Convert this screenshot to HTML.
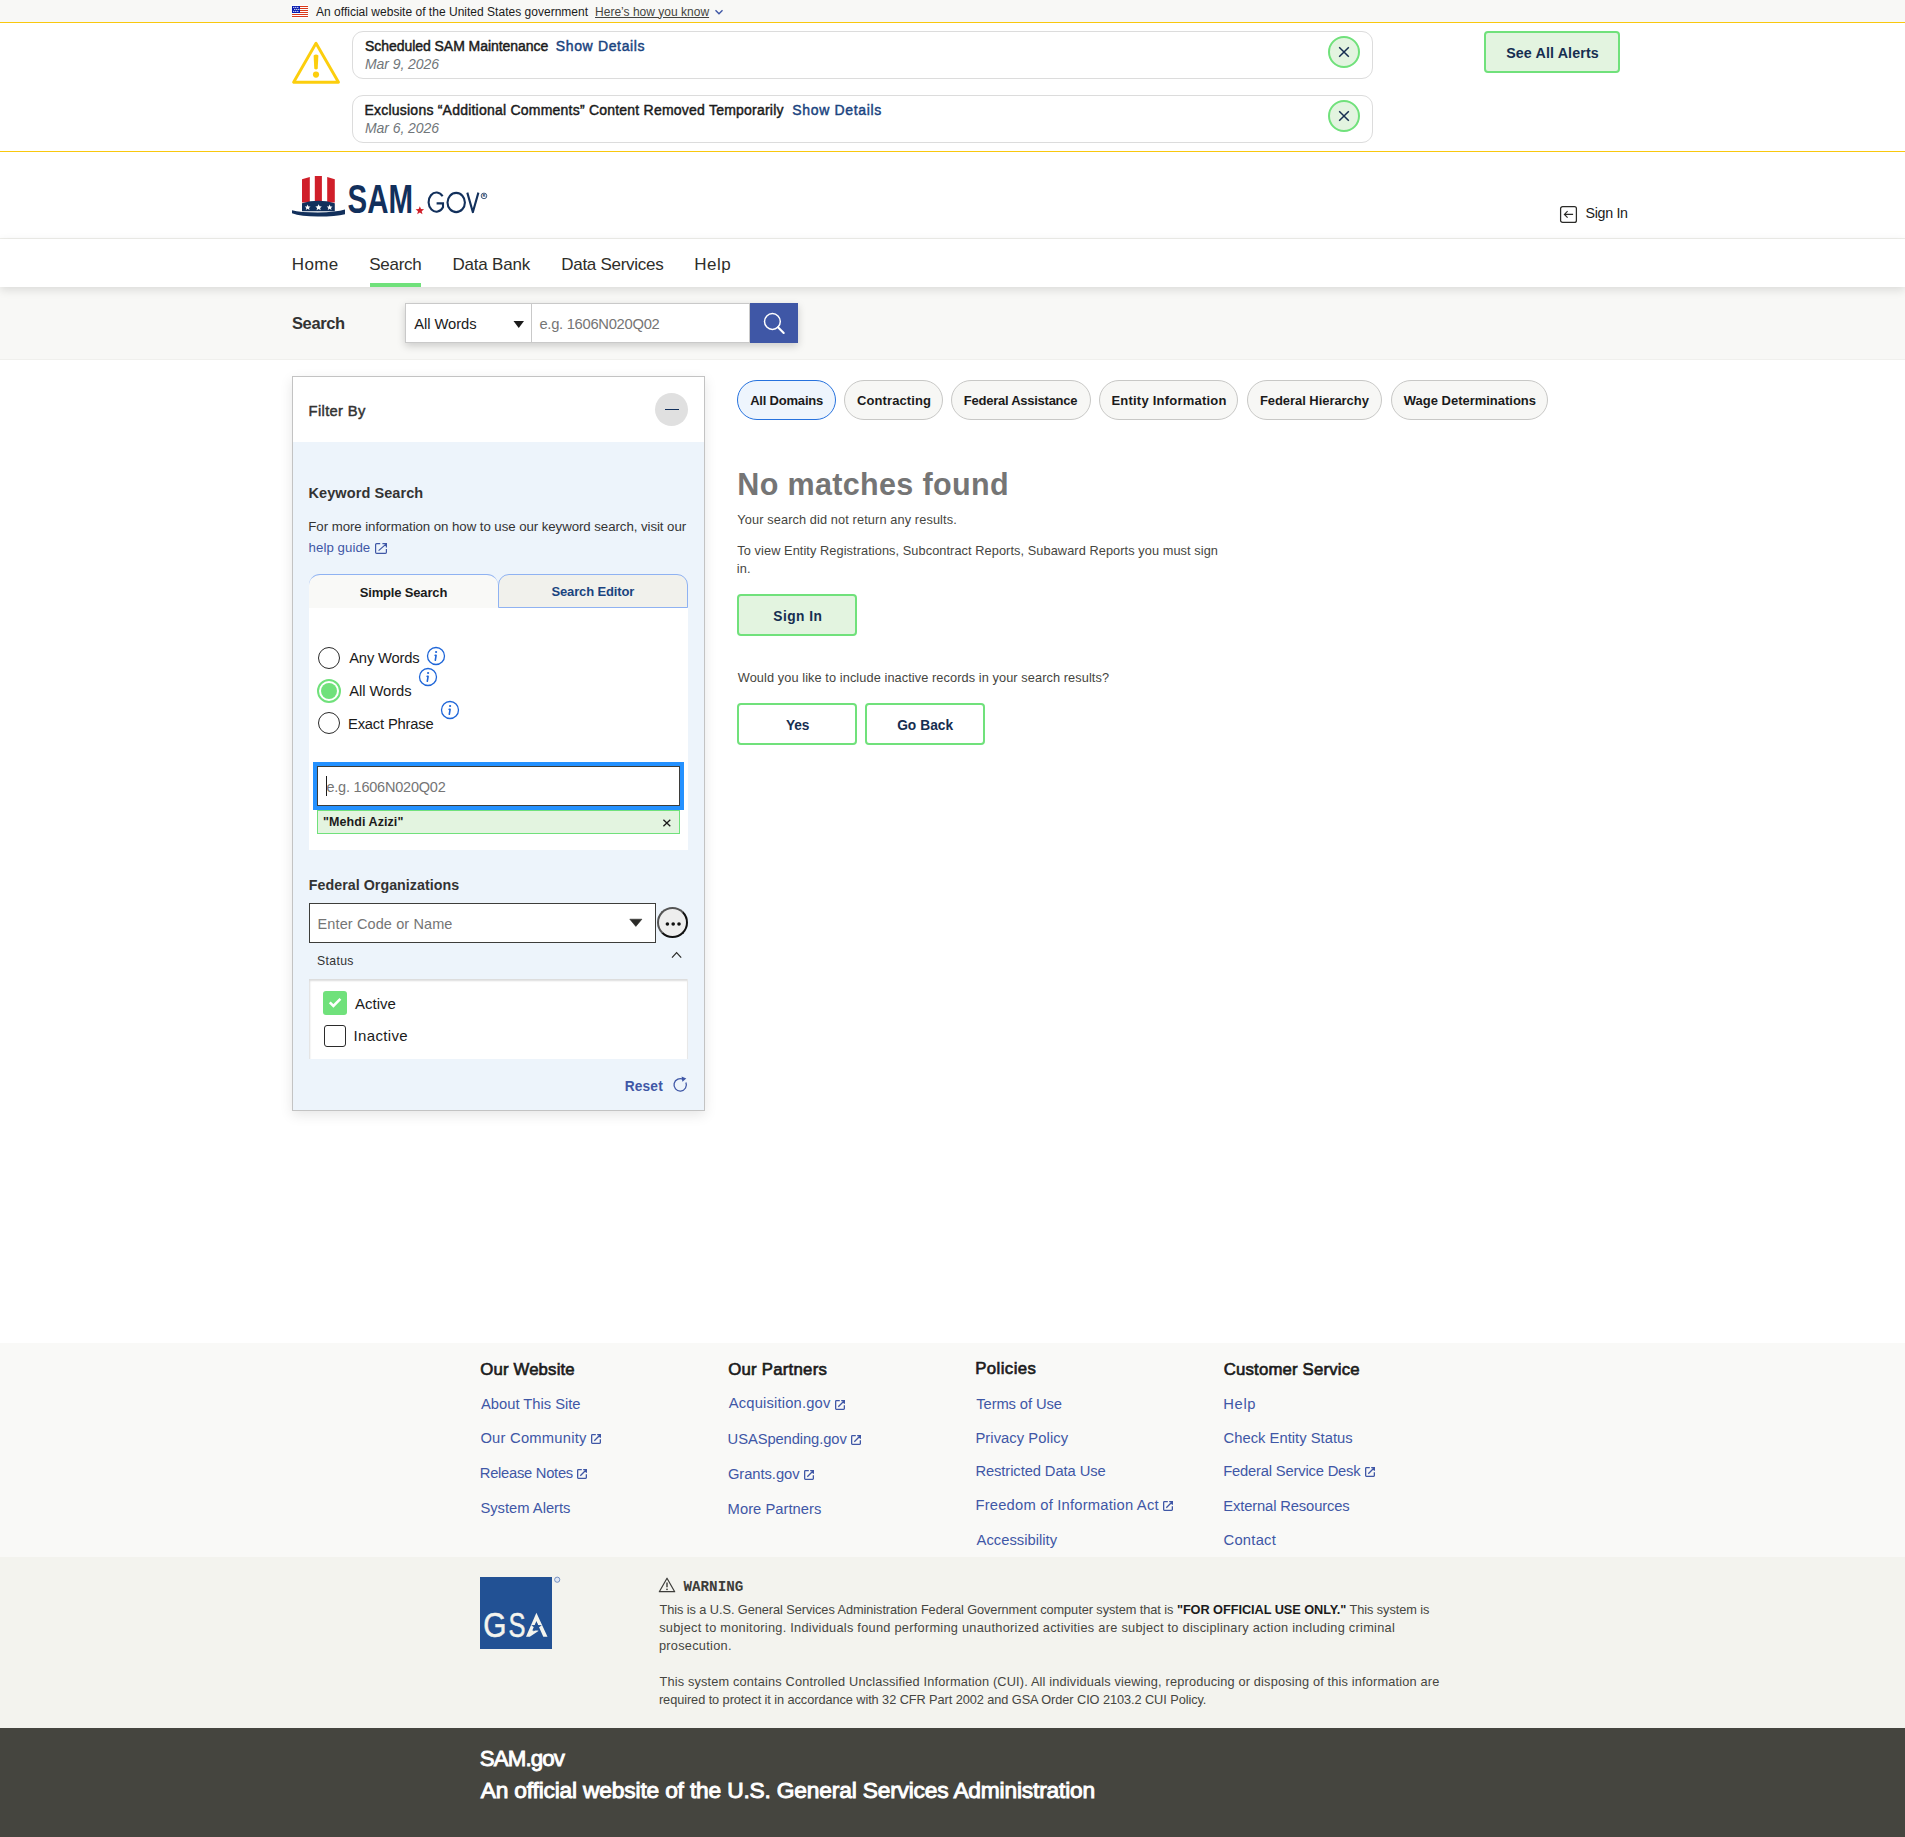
<!DOCTYPE html>
<html lang="en"><head><meta charset="utf-8"><title>SAM.gov | Search</title>
<style>
*{box-sizing:content-box}
html,body{margin:0;padding:0;background:#fff;width:1905px;height:1837px;overflow:hidden;position:relative}
body{font-family:"Liberation Sans",sans-serif}
.a{position:absolute}
.circ{border-radius:50%}
.t{position:absolute;line-height:0;white-space:nowrap;font-family:"Liberation Sans",sans-serif}
svg.a{overflow:visible}
</style></head><body>

<!-- banner -->
<div class="a" style="left:0;top:0;width:1905px;height:22px;background:#f8f8f6"></div>
<div class="a" style="left:0;top:22px;width:1905px;height:1px;background:#f9c80e"></div>
<svg class="a" style="left:292px;top:5px" width="16" height="13" viewBox="0 0 16 13" shape-rendering="crispEdges">
<rect width="16" height="13" fill="#fff"/>
<rect y="1" width="16" height="1" fill="#d9391a"/><rect y="3" width="16" height="1" fill="#d9391a"/><rect y="5" width="16" height="1" fill="#d9391a"/><rect y="7" width="16" height="1" fill="#d9391a"/><rect y="9" width="16" height="1" fill="#d9391a"/><rect y="11" width="16" height="1" fill="#d9391a"/>
<rect x="0" y="1" width="8" height="7" fill="#0a1db0"/>
</svg>
<svg class="a" style="left:292px;top:5px" width="16" height="13" viewBox="0 0 16 13"><g fill="#fff"><circle cx="1.8" cy="2.4" r=".6"/><circle cx="3.8" cy="2.4" r=".6"/><circle cx="5.8" cy="2.4" r=".6"/><circle cx="2.8" cy="4.4" r=".6"/><circle cx="4.8" cy="4.4" r=".6"/><circle cx="6.8" cy="4.4" r=".6"/><circle cx="1.8" cy="6.4" r=".6"/><circle cx="3.8" cy="6.4" r=".6"/><circle cx="5.8" cy="6.4" r=".6"/></g></svg>
<svg class="a" style="left:713px;top:7px" width="12" height="10" viewBox="0 0 12 10"><path d="M2.5 3.2L6 6.7L9.5 3.2" fill="none" stroke="#3f57a6" stroke-width="1.4"/></svg>

<!-- alerts -->
<div class="a" style="left:0;top:151px;width:1905px;height:1px;background:#f9c80e"></div>
<svg class="a" style="left:290px;top:40px" width="52" height="46" viewBox="0 0 52 46"><path d="M26 3.3L3.6 42.3H48.5Z" fill="none" stroke="#fcce0d" stroke-width="2.9" stroke-linejoin="round"/><path d="M23.6 15.6Q26 13.6 28.4 15.6L27.7 28.7Q26 30.1 24.3 28.7Z" fill="#fcce0d"/><circle cx="26" cy="34.6" r="3.1" fill="#fcce0d"/></svg>
<div class="a" style="left:352px;top:31px;width:1019px;height:46px;border:1px solid #dcdcdc;border-radius:11px"></div>
<div class="a" style="left:352px;top:95px;width:1019px;height:46px;border:1px solid #dcdcdc;border-radius:11px"></div>
<div class="a circ" style="left:1328px;top:36px;width:28px;height:28px;border:2px solid #70e17b;background:#e3f4e0"></div>
<div class="a circ" style="left:1328px;top:100px;width:28px;height:28px;border:2px solid #70e17b;background:#e3f4e0"></div>
<svg class="a" style="left:1334px;top:42px" width="20" height="20" viewBox="0 0 20 20"><path d="M5.2 5.2L14.8 14.8M14.8 5.2L5.2 14.8" stroke="#162e51" stroke-width="1.5"/></svg>
<svg class="a" style="left:1334px;top:106px" width="20" height="20" viewBox="0 0 20 20"><path d="M5.2 5.2L14.8 14.8M14.8 5.2L5.2 14.8" stroke="#162e51" stroke-width="1.5"/></svg>
<div class="a" style="left:1484px;top:31px;width:132px;height:38px;border:2px solid #70e17b;border-radius:4px;background:#e3f4e0"></div>

<!-- header -->
<div class="a" style="left:0;top:238px;width:1905px;height:1px;background:#efefeb"></div>
<svg class="a" style="left:292px;top:170px" width="200" height="50" viewBox="0 0 200 50">
 <path d="M10 9.3L17.8 7.1V32.5H10Z" fill="#d01f2a"/>
 <path d="M22.8 6H29.9V32.5H22.8Z" fill="#d01f2a"/>
 <path d="M35.2 7.1L42.8 9.3V32.5H35.2Z" fill="#d01f2a"/>
 <path d="M10 33.2Q26.4 28.4 42.8 33.2V41.3H10Z" fill="#12305c"/>
 <path d="M0 40.2Q8 42.4 26 42.4Q44 42.4 53 39.6V44.3Q44 46.6 26 46.6Q9 46.6 0 43.3Z" fill="#12305c"/>
 <g fill="#fff"><path d="M15.6 34.5l.9 1.9 2 .2-1.5 1.3.5 2-1.9-1.1-1.8 1.1.5-2-1.5-1.3 2-.2z"/><path d="M26.6 34.2l1 2.1 2.2.2-1.7 1.5.5 2.2-2-1.2-2 1.2.5-2.2-1.7-1.5 2.2-.2z"/><path d="M37.6 34.5l.9 1.9 2 .2-1.5 1.3.5 2-1.9-1.1-1.8 1.1.5-2-1.5-1.3 2-.2z"/></g>
 <text x="55.5" y="42.6" font-family="Liberation Sans" font-weight="700" font-size="39.8" fill="#12305c" textLength="65.5" lengthAdjust="spacingAndGlyphs">SAM</text>
 <path d="M127.8 36.2l1.2 2.9 3.1.2-2.4 2 .8 3-2.7-1.7-2.6 1.7.8-3-2.4-2 3.1-.2z" fill="#d01f2a"/>
 <g fill="none" stroke="#12305c" stroke-width="2.1"><path d="M150.6 26.3A7.8 9.6 0 1 0 151 37.2V33.4H144.6"/><ellipse cx="164.2" cy="32.5" rx="8.7" ry="9.6"/><path d="M175.3 22.6L180.85 42.1L186.4 22.6" stroke-linejoin="round"/></g>
 <circle cx="192" cy="25.9" r="2.8" fill="none" stroke="#12305c" stroke-width=".8"/><text x="190.6" y="27.3" font-family="Liberation Sans" font-size="4" font-weight="700" fill="#12305c">R</text>
</svg>
<svg class="a" style="left:1558px;top:204px" width="21" height="21" viewBox="0 0 21 21"><rect x="2.6" y="2.6" width="15.8" height="15.8" rx="2" fill="none" stroke="#2b2b28" stroke-width="1.25"/><path d="M15.1 10.4H6.5M9.6 7.2L6.4 10.4L9.6 13.6" fill="none" stroke="#2b2b28" stroke-width="1.15"/></svg>

<!-- nav -->
<div class="a" style="left:0;top:287px;width:1905px;height:72px;background:#f8f8f6;border-bottom:1px solid #f0f0ed"></div>
<div class="a" style="left:0;top:239px;width:1905px;height:48px;background:#fff;box-shadow:0 3px 9px rgba(0,0,0,.12)"></div>
<div class="a" style="left:370px;top:283px;width:51px;height:4px;background:#70e17b"></div>
<div class="a" style="left:405px;top:303px;width:393px;height:40px;box-shadow:0 3px 8px rgba(0,0,0,.18)"></div>
<div class="a" style="left:405px;top:303px;width:125px;height:38px;border:1px solid #c9c9c9;background:#fff"></div>
<div class="a" style="left:532px;top:303px;width:217px;height:38px;border:1px solid #c9c9c9;border-left:0;background:#fff"></div>
<div class="a" style="left:750px;top:303px;width:48px;height:40px;background:#3f57a6"></div>
<svg class="a" style="left:510px;top:318px" width="16" height="12" viewBox="0 0 16 12"><path d="M3.5 3H14L8.75 10Z" fill="#1b1b1b"/></svg>
<svg class="a" style="left:760px;top:309px" width="28" height="28" viewBox="0 0 28 28"><circle cx="12.4" cy="12.5" r="7.9" fill="none" stroke="#fff" stroke-width="1.5"/><path d="M18 18.3L23.7 24" stroke="#fff" stroke-width="2.1" stroke-linecap="round"/></svg>

<!-- filter panel -->
<div class="a" style="left:292px;top:376px;width:411px;height:733px;border:1px solid #c3c3c3;background:#edf4fb;box-shadow:0 4px 12px rgba(0,0,0,.10)"></div>
<div class="a" style="left:293px;top:377px;width:411px;height:65px;background:#fff"></div>
<div class="a circ" style="left:655px;top:393px;width:33px;height:33px;background:#e0e0e0"></div>
<div class="a" style="left:665px;top:408.5px;width:14px;height:1.6px;background:#12305c"></div>
<svg class="a" style="left:372px;top:541px" width="17" height="14"></svg>


<!-- tabs -->
<div class="a" style="left:309px;top:574px;width:189px;height:33px;border-top:1px solid #8fb2f2;border-radius:11px 11px 0 0;background:#f9f9f7"></div>
<div class="a" style="left:498px;top:574px;width:188px;height:32px;border:1px solid #8fb2f2;border-radius:11px 11px 0 0;background:#f1f1ec"></div>
<div class="a" style="left:309px;top:608px;width:379px;height:242px;background:#fff"></div>
<div class="a circ" style="left:318px;top:647px;width:20px;height:20px;border:1px solid #2b2b2b"></div>
<div class="a circ" style="left:317px;top:679px;width:20px;height:20px;border:2px solid #70e17b"></div>
<div class="a circ" style="left:321px;top:683px;width:16px;height:16px;background:#70e17b"></div>
<div class="a circ" style="left:318px;top:712px;width:20px;height:20px;border:1px solid #2b2b2b"></div>
<svg class="a" style="left:426.3px;top:646.2px" width="20" height="20" viewBox="0 0 20 20"><circle cx="10" cy="10" r="8.5" fill="none" stroke="#1f66d8" stroke-width="1.3"/><circle cx="10.1" cy="6" r="1.1" fill="#1f66d8"/><path d="M9.2 9.4H10.1L9.3 14.3" fill="none" stroke="#1f66d8" stroke-width="1.6" stroke-linecap="round" stroke-linejoin="round"/></svg>
<svg class="a" style="left:418.2px;top:667.2px" width="20" height="20" viewBox="0 0 20 20"><circle cx="10" cy="10" r="8.5" fill="none" stroke="#1f66d8" stroke-width="1.3"/><circle cx="10.1" cy="6" r="1.1" fill="#1f66d8"/><path d="M9.2 9.4H10.1L9.3 14.3" fill="none" stroke="#1f66d8" stroke-width="1.6" stroke-linecap="round" stroke-linejoin="round"/></svg>
<svg class="a" style="left:440.2px;top:700.2px" width="20" height="20" viewBox="0 0 20 20"><circle cx="10" cy="10" r="8.5" fill="none" stroke="#1f66d8" stroke-width="1.3"/><circle cx="10.1" cy="6" r="1.1" fill="#1f66d8"/><path d="M9.2 9.4H10.1L9.3 14.3" fill="none" stroke="#1f66d8" stroke-width="1.6" stroke-linecap="round" stroke-linejoin="round"/></svg>
<div class="a" style="left:313px;top:762px;width:363px;height:40px;border:4px solid #2491ff"></div>
<div class="a" style="left:317px;top:766px;width:361px;height:38px;border:1px solid #3d3d3a;background:#fff"></div>
<div class="a" style="left:326px;top:776px;width:1.3px;height:20px;background:#1b1b1b"></div>
<div class="a" style="left:317px;top:810px;width:361px;height:22px;border:1px solid #70e17b;background:#e3f4e0"></div>
<svg class="a" style="left:660px;top:817px" width="14" height="12" viewBox="0 0 14 12"><path d="M3.4 2.7L10.3 9.3M10.3 2.7L3.4 9.3" stroke="#1b1b1b" stroke-width="1.3"/></svg>
<!-- fed org -->
<div class="a" style="left:309px;top:903px;width:345px;height:38px;border:1px solid #3d3d3a;background:#fff"></div>
<svg class="a" style="left:626px;top:915px" width="20" height="14" viewBox="0 0 20 14"><path d="M3.8 4.2H15.9L9.85 11.4Z" fill="#2b2b28" stroke="#2b2b28" stroke-width=".6" stroke-linejoin="round"/></svg>
<div class="a circ" style="left:657px;top:907px;width:27px;height:27px;border:2px solid #111;border-top-color:#555;border-left-color:#555;background:#eee"></div>
<svg class="a" style="left:660px;top:916px" width="25" height="14" viewBox="0 0 25 14"><g fill="#111"><circle cx="7.4" cy="8" r="1.8"/><circle cx="13.2" cy="8" r="1.8"/><circle cx="19" cy="8" r="1.8"/></g></svg>
<svg class="a" style="left:668px;top:948px" width="18" height="14" viewBox="0 0 18 14"><path d="M4 9.6L8.6 4.6L13.2 9.6" fill="none" stroke="#2b2b28" stroke-width="1.2"/></svg>
<div class="a" style="left:309px;top:979px;width:378px;height:80px;background:#fff;border-right:1px solid #e8e8e8;box-shadow:inset 1px 2px 2px rgba(0,0,0,.14)"></div>
<div class="a" style="left:323px;top:991px;width:24px;height:24px;border-radius:3px;background:#70e17b"></div>
<svg class="a" style="left:323px;top:991px" width="24" height="24" viewBox="0 0 24 24"><path d="M6.8 11.4L10.4 14.9L17.4 7.8" fill="none" stroke="#fff" stroke-width="2.6"/></svg>
<div class="a" style="left:324px;top:1025px;width:19.6px;height:19.6px;border:1.4px solid #2b2b2b;border-radius:3px;background:#fff"></div>
<svg class="a" style="left:670px;top:1075px" width="20" height="20" viewBox="0 0 20 20"><path d="M13.5 4.6A6.2 6.2 0 1 0 15.9 7.4" fill="none" stroke="#3f57a6" stroke-width="1.3"/><path d="M11.6 1.4L16.3 3.6L12.4 6.8Z" fill="#3f57a6"/></svg>

<!-- pills -->
<div class="a" style="left:737.2px;top:380px;width:96.59999999999991px;height:38px;border:1px solid #2672de;border-radius:20px;background:#eef5fd"></div><div class="a" style="left:844.2px;top:380px;width:96.5px;height:38px;border:1px solid #c8c8c6;border-radius:20px;background:#f7f7f5"></div><div class="a" style="left:951px;top:380px;width:137.70000000000005px;height:38px;border:1px solid #c8c8c6;border-radius:20px;background:#f7f7f5"></div><div class="a" style="left:1099.1px;top:380px;width:137.4000000000001px;height:38px;border:1px solid #c8c8c6;border-radius:20px;background:#f7f7f5"></div><div class="a" style="left:1247.2px;top:380px;width:133.20000000000005px;height:38px;border:1px solid #c8c8c6;border-radius:20px;background:#f7f7f5"></div><div class="a" style="left:1391px;top:380px;width:155.4000000000001px;height:38px;border:1px solid #c8c8c6;border-radius:20px;background:#f7f7f5"></div>
<!-- buttons -->
<div class="a" style="left:737px;top:594px;width:116px;height:38px;border:2px solid #70e17b;border-radius:4px;background:#e3f4e0"></div>
<div class="a" style="left:737px;top:703px;width:116px;height:37.5px;border:2px solid #70e17b;border-radius:4px;background:#fff"></div>
<div class="a" style="left:865px;top:703px;width:116px;height:37.5px;border:2px solid #70e17b;border-radius:4px;background:#fff"></div>

<!-- footer -->
<div class="a" style="left:0;top:1343px;width:1905px;height:214px;background:#f9f9f7"></div>
<div class="a" style="left:0;top:1557px;width:1905px;height:171px;background:#f3f3ee"></div>
<div class="a" style="left:0;top:1728px;width:1905px;height:109px;background:#45453f"></div>
<svg class="a" style="left:590.5px;top:1434.4px" width="10" height="10" viewBox="0 0 10 10"><path d="M4.8 0.65H1.4Q0.65 0.65 0.65 1.4V8.6Q0.65 9.35 1.4 9.35H8.6Q9.35 9.35 9.35 8.6V5.3M6.2 0.65H9.35V3.7M3.3 6.7L9 1" fill="none" stroke="#3f57a6" stroke-width="1.3"/></svg><svg class="a" style="left:577px;top:1469.1px" width="10" height="10" viewBox="0 0 10 10"><path d="M4.8 0.65H1.4Q0.65 0.65 0.65 1.4V8.6Q0.65 9.35 1.4 9.35H8.6Q9.35 9.35 9.35 8.6V5.3M6.2 0.65H9.35V3.7M3.3 6.7L9 1" fill="none" stroke="#3f57a6" stroke-width="1.3"/></svg><svg class="a" style="left:835px;top:1400px" width="10" height="10" viewBox="0 0 10 10"><path d="M4.8 0.65H1.4Q0.65 0.65 0.65 1.4V8.6Q0.65 9.35 1.4 9.35H8.6Q9.35 9.35 9.35 8.6V5.3M6.2 0.65H9.35V3.7M3.3 6.7L9 1" fill="none" stroke="#3f57a6" stroke-width="1.3"/></svg><svg class="a" style="left:851px;top:1435.3px" width="10" height="10" viewBox="0 0 10 10"><path d="M4.8 0.65H1.4Q0.65 0.65 0.65 1.4V8.6Q0.65 9.35 1.4 9.35H8.6Q9.35 9.35 9.35 8.6V5.3M6.2 0.65H9.35V3.7M3.3 6.7L9 1" fill="none" stroke="#3f57a6" stroke-width="1.3"/></svg><svg class="a" style="left:804px;top:1470.2px" width="10" height="10" viewBox="0 0 10 10"><path d="M4.8 0.65H1.4Q0.65 0.65 0.65 1.4V8.6Q0.65 9.35 1.4 9.35H8.6Q9.35 9.35 9.35 8.6V5.3M6.2 0.65H9.35V3.7M3.3 6.7L9 1" fill="none" stroke="#3f57a6" stroke-width="1.3"/></svg><svg class="a" style="left:1163px;top:1501px" width="10" height="10" viewBox="0 0 10 10"><path d="M4.8 0.65H1.4Q0.65 0.65 0.65 1.4V8.6Q0.65 9.35 1.4 9.35H8.6Q9.35 9.35 9.35 8.6V5.3M6.2 0.65H9.35V3.7M3.3 6.7L9 1" fill="none" stroke="#3f57a6" stroke-width="1.3"/></svg><svg class="a" style="left:1365px;top:1467.3px" width="10" height="10" viewBox="0 0 10 10"><path d="M4.8 0.65H1.4Q0.65 0.65 0.65 1.4V8.6Q0.65 9.35 1.4 9.35H8.6Q9.35 9.35 9.35 8.6V5.3M6.2 0.65H9.35V3.7M3.3 6.7L9 1" fill="none" stroke="#3f57a6" stroke-width="1.3"/></svg>
<svg class="a" style="left:480px;top:1577px" width="82" height="72" viewBox="0 0 82 72">
 <rect width="72" height="72" fill="#225194"/>
 <text x="3.2" y="60" font-family="Liberation Sans" font-size="34.5" fill="#f4f4ee" stroke="#f4f4ee" stroke-width=".5" textLength="23.2" lengthAdjust="spacingAndGlyphs">G</text>
 <text x="28.6" y="60" font-family="Liberation Sans" font-size="34.5" fill="#f4f4ee" stroke="#f4f4ee" stroke-width=".5" textLength="17" lengthAdjust="spacingAndGlyphs">S</text>
 <path d="M56.4 35.75L67.5 59.8H63.3L56.4 44.3L52.3 53.6L59.2 53.6L49.8 59.8H46Z" fill="#f4f4ee"/>
 <path d="M56.50 44.30 L57.82 48.08 L61.83 48.17 L58.64 50.60 L59.79 54.43 L56.50 52.15 L53.21 54.43 L54.36 50.60 L51.17 48.17 L55.18 48.08Z" fill="#225194"/>
 <circle cx="77.2" cy="2.7" r="2.6" fill="#dfe6f2" stroke="#5b7bb7" stroke-width=".8"/>
</svg>
<svg class="a" style="left:657px;top:1576px" width="20" height="18" viewBox="0 0 20 18"><path d="M10 2.2L2.3 15.7H17.7Z" fill="none" stroke="#3d3d3a" stroke-width="1.2" stroke-linejoin="round"/><path d="M10 6.4V11.3" stroke="#3d3d3a" stroke-width="1.4"/><circle cx="10" cy="13.3" r=".85" fill="#3d3d3a"/></svg>

<svg class="a" style="left:375px;top:543px" width="12" height="11" viewBox="0 0 12 11"><path d="M5.2 0.6H1.7Q0.6 0.6 0.6 1.7V9.3Q0.6 10.4 1.7 10.4H10.3Q11.4 10.4 11.4 9.3V5.9M7.4 0.6H11.4V4.4M3.6 7.6L11 1.1" fill="none" stroke="#3f57a6" stroke-width="1.2"/></svg>
<div class="t" style="left:316.00px;top:11.60px;font-size:12.0px;letter-spacing:0.016px;color:#1b1b1b;">An official website of the United States government</div>
<div class="t" style="left:595.04px;top:11.60px;font-size:12.0px;letter-spacing:0.011px;color:#454540;text-decoration:underline;text-underline-offset:0.7px">Here’s how you know</div>
<div class="t" style="left:365.04px;top:46.30px;font-size:14.0px;letter-spacing:-0.050px;color:#1b1b1b;-webkit-text-stroke:0.45px currentColor">Scheduled SAM Maintenance</div>
<div class="t" style="left:555.74px;top:46.30px;font-size:14.0px;letter-spacing:0.651px;color:#1a4480;-webkit-text-stroke:0.45px currentColor">Show Details</div>
<div class="t" style="left:365.04px;top:63.80px;font-size:14.0px;letter-spacing:-0.082px;color:#71767a;font-style:italic">Mar 9, 2026</div>
<div class="t" style="left:364.48px;top:109.60px;font-size:14.0px;letter-spacing:0.222px;color:#1b1b1b;-webkit-text-stroke:0.45px currentColor">Exclusions “Additional Comments” Content Removed Temporarily</div>
<div class="t" style="left:792.34px;top:109.60px;font-size:14.0px;letter-spacing:0.651px;color:#1a4480;-webkit-text-stroke:0.45px currentColor">Show Details</div>
<div class="t" style="left:365.04px;top:127.80px;font-size:14.0px;letter-spacing:-0.082px;color:#71767a;font-style:italic">Mar 6, 2026</div>
<div class="t" style="left:1506.13px;top:53.01px;font-size:14.25px;letter-spacing:0.139px;color:#162e51;font-weight:700;">See All Alerts</div>
<div class="t" style="left:1585.43px;top:213.01px;font-size:14.25px;letter-spacing:-0.292px;color:#1b1b1b;">Sign In</div>
<div class="t" style="left:291.84px;top:264.65px;font-size:17.0px;letter-spacing:0.340px;color:#2e2e2a;">Home</div>
<div class="t" style="left:369.32px;top:264.65px;font-size:17.0px;letter-spacing:-0.284px;color:#2e2e2a;">Search</div>
<div class="t" style="left:452.44px;top:264.65px;font-size:17.0px;letter-spacing:-0.208px;color:#2e2e2a;">Data Bank</div>
<div class="t" style="left:561.24px;top:264.65px;font-size:17.0px;letter-spacing:-0.275px;color:#2e2e2a;">Data Services</div>
<div class="t" style="left:694.34px;top:264.65px;font-size:17.0px;letter-spacing:0.440px;color:#2e2e2a;">Help</div>
<div class="t" style="left:291.94px;top:323.03px;font-size:16.5px;letter-spacing:-0.372px;color:#333333;font-weight:700;">Search</div>
<div class="t" style="left:414.30px;top:323.64px;font-size:14.75px;letter-spacing:-0.068px;color:#1b1b1b;">All Words</div>
<div class="t" style="left:539.41px;top:323.64px;font-size:14.75px;letter-spacing:-0.287px;color:#757575;">e.g. 1606N020Q02</div>
<div class="t" style="left:308.62px;top:410.84px;font-size:14.75px;letter-spacing:0.324px;color:#333333;-webkit-text-stroke:0.45px currentColor">Filter By</div>
<div class="t" style="left:308.53px;top:492.82px;font-size:14.5px;letter-spacing:0.082px;color:#333333;font-weight:700;">Keyword Search</div>
<div class="t" style="left:308.34px;top:526.66px;font-size:13.25px;letter-spacing:-0.058px;color:#333333;">For more information on how to use our keyword search, visit our</div>
<div class="t" style="left:308.60px;top:548.36px;font-size:13.25px;letter-spacing:0.046px;color:#3f57a6;">help guide</div>
<div class="t" style="left:359.78px;top:592.75px;font-size:13.0px;letter-spacing:-0.170px;color:#1b1b1b;font-weight:700;">Simple Search</div>
<div class="t" style="left:551.48px;top:591.75px;font-size:13.0px;letter-spacing:-0.143px;color:#1a4480;font-weight:700;">Search Editor</div>
<div class="t" style="left:349.20px;top:657.84px;font-size:14.75px;letter-spacing:-0.174px;color:#1b1b1b;">Any Words</div>
<div class="t" style="left:349.20px;top:690.84px;font-size:14.75px;letter-spacing:-0.056px;color:#1b1b1b;">All Words</div>
<div class="t" style="left:348.02px;top:724.04px;font-size:14.75px;letter-spacing:-0.186px;color:#1b1b1b;">Exact Phrase</div>
<div class="t" style="left:326.42px;top:786.92px;font-size:14.5px;letter-spacing:-0.215px;color:#757575;">e.g. 1606N020Q02</div>
<div class="t" style="left:322.95px;top:822.42px;font-size:12.5px;letter-spacing:0.079px;color:#1b1b1b;font-weight:700;">"Mehdi Azizi"</div>
<div class="t" style="left:308.84px;top:885.01px;font-size:14.25px;letter-spacing:0.030px;color:#333333;font-weight:700;">Federal Organizations</div>
<div class="t" style="left:317.54px;top:923.62px;font-size:14.5px;letter-spacing:0.113px;color:#757575;">Enter Code or Name</div>
<div class="t" style="left:317.11px;top:961.11px;font-size:12.25px;letter-spacing:0.318px;color:#333333;">Status</div>
<div class="t" style="left:355.10px;top:1003.75px;font-size:15.0px;letter-spacing:-0.040px;color:#1b1b1b;">Active</div>
<div class="t" style="left:353.60px;top:1035.75px;font-size:15.0px;letter-spacing:0.343px;color:#1b1b1b;">Inactive</div>
<div class="t" style="left:624.67px;top:1086.99px;font-size:13.75px;letter-spacing:0.156px;color:#3f57a6;font-weight:700;">Reset</div>
<div class="t" style="left:750.14px;top:400.55px;font-size:13.0px;letter-spacing:-0.196px;color:#1b1b1b;font-weight:700;">All Domains</div>
<div class="t" style="left:857.08px;top:400.55px;font-size:13.0px;letter-spacing:0.090px;color:#1b1b1b;font-weight:700;">Contracting</div>
<div class="t" style="left:963.82px;top:400.55px;font-size:13.0px;letter-spacing:-0.255px;color:#1b1b1b;font-weight:700;">Federal Assistance</div>
<div class="t" style="left:1111.42px;top:400.55px;font-size:13.0px;letter-spacing:0.222px;color:#1b1b1b;font-weight:700;">Entity Information</div>
<div class="t" style="left:1259.92px;top:400.55px;font-size:13.0px;letter-spacing:-0.053px;color:#1b1b1b;font-weight:700;">Federal Hierarchy</div>
<div class="t" style="left:1403.80px;top:400.55px;font-size:13.0px;letter-spacing:-0.012px;color:#1b1b1b;font-weight:700;">Wage Determinations</div>
<div class="t" style="left:737.27px;top:483.93px;font-size:30.5px;letter-spacing:0.353px;color:#757575;font-weight:700;">No matches found</div>
<div class="t" style="left:737.35px;top:520.14px;font-size:12.75px;letter-spacing:0.116px;color:#454540;">Your search did not return any results.</div>
<div class="t" style="left:737.35px;top:550.84px;font-size:12.75px;letter-spacing:0.081px;color:#454540;">To view Entity Registrations, Subcontract Reports, Subaward Reports you must sign</div>
<div class="t" style="left:736.84px;top:568.94px;font-size:12.75px;letter-spacing:0.081px;color:#454540;">in.</div>
<div class="t" style="left:773.25px;top:616.59px;font-size:13.75px;letter-spacing:0.488px;color:#162e51;font-weight:700;">Sign In</div>
<div class="t" style="left:737.80px;top:677.54px;font-size:12.75px;letter-spacing:0.089px;color:#454540;">Would you like to include inactive records in your search results?</div>
<div class="t" style="left:786.12px;top:725.99px;font-size:13.75px;letter-spacing:-0.262px;color:#162e51;font-weight:700;">Yes</div>
<div class="t" style="left:897.15px;top:725.99px;font-size:13.75px;letter-spacing:0.038px;color:#162e51;font-weight:700;">Go Back</div>
<div class="t" style="left:480.23px;top:1369.74px;font-size:16.75px;letter-spacing:0.165px;color:#1b1b1b;-webkit-text-stroke:0.65px currentColor">Our Website</div>
<div class="t" style="left:728.13px;top:1369.74px;font-size:16.75px;letter-spacing:0.263px;color:#1b1b1b;-webkit-text-stroke:0.65px currentColor">Our Partners</div>
<div class="t" style="left:975.26px;top:1368.74px;font-size:16.75px;letter-spacing:0.422px;color:#1b1b1b;-webkit-text-stroke:0.65px currentColor">Policies</div>
<div class="t" style="left:1223.73px;top:1369.74px;font-size:16.75px;letter-spacing:0.183px;color:#1b1b1b;-webkit-text-stroke:0.65px currentColor">Customer Service</div>
<div class="t" style="left:481.00px;top:1403.74px;font-size:14.75px;letter-spacing:-0.016px;color:#3f57a6;">About This Site</div>
<div class="t" style="left:480.41px;top:1437.84px;font-size:14.75px;letter-spacing:0.228px;color:#3f57a6;">Our Community</div>
<div class="t" style="left:479.82px;top:1472.54px;font-size:14.75px;letter-spacing:-0.282px;color:#3f57a6;">Release Notes</div>
<div class="t" style="left:480.41px;top:1508.04px;font-size:14.75px;letter-spacing:-0.008px;color:#3f57a6;">System Alerts</div>
<div class="t" style="left:728.80px;top:1403.44px;font-size:14.75px;letter-spacing:0.163px;color:#3f57a6;">Acquisition.gov</div>
<div class="t" style="left:727.62px;top:1438.74px;font-size:14.75px;letter-spacing:-0.099px;color:#3f57a6;">USASpending.gov</div>
<div class="t" style="left:727.91px;top:1473.64px;font-size:14.75px;letter-spacing:-0.055px;color:#3f57a6;">Grants.gov</div>
<div class="t" style="left:727.62px;top:1508.64px;font-size:14.75px;letter-spacing:0.021px;color:#3f57a6;">More Partners</div>
<div class="t" style="left:976.31px;top:1403.74px;font-size:14.75px;letter-spacing:-0.113px;color:#3f57a6;">Terms of Use</div>
<div class="t" style="left:975.42px;top:1437.84px;font-size:14.75px;letter-spacing:0.064px;color:#3f57a6;">Privacy Policy</div>
<div class="t" style="left:975.42px;top:1470.74px;font-size:14.75px;letter-spacing:-0.094px;color:#3f57a6;">Restricted Data Use</div>
<div class="t" style="left:975.42px;top:1504.64px;font-size:14.75px;letter-spacing:0.212px;color:#3f57a6;">Freedom of Information Act</div>
<div class="t" style="left:976.60px;top:1539.84px;font-size:14.75px;letter-spacing:0.013px;color:#3f57a6;">Accessibility</div>
<div class="t" style="left:1223.22px;top:1403.74px;font-size:14.75px;letter-spacing:0.662px;color:#3f57a6;">Help</div>
<div class="t" style="left:1223.52px;top:1437.84px;font-size:14.75px;letter-spacing:0.025px;color:#3f57a6;">Check Entity Status</div>
<div class="t" style="left:1223.22px;top:1470.74px;font-size:14.75px;letter-spacing:-0.186px;color:#3f57a6;">Federal Service Desk</div>
<div class="t" style="left:1223.22px;top:1505.84px;font-size:14.75px;letter-spacing:-0.132px;color:#3f57a6;">External Resources</div>
<div class="t" style="left:1223.52px;top:1539.84px;font-size:14.75px;letter-spacing:0.241px;color:#3f57a6;">Contact</div>
<div class="t" style="left:683.40px;top:1586.91px;font-size:14.25px;letter-spacing:0.020px;color:#3d3d3a;font-weight:700;font-family:'Liberation Mono',monospace;">WARNING</div>
<div class="t" style="left:659.45px;top:1609.54px;font-size:12.75px;letter-spacing:-0.061px;color:#454540;">This is a U.S. General Services Administration Federal Government computer system that is <b style="color:#1b1b1b">"FOR OFFICIAL USE ONLY."</b> This system is</div>
<div class="t" style="left:659.19px;top:1628.14px;font-size:12.75px;letter-spacing:0.276px;color:#454540;">subject to monitoring. Individuals found performing unauthorized activities are subject to disciplinary action including criminal</div>
<div class="t" style="left:658.94px;top:1645.74px;font-size:12.75px;letter-spacing:0.276px;color:#454540;">prosecution.</div>
<div class="t" style="left:659.45px;top:1681.54px;font-size:12.75px;letter-spacing:0.169px;color:#454540;">This system contains Controlled Unclassified Information (CUI). All individuals viewing, reproducing or disposing of this information are</div>
<div class="t" style="left:658.94px;top:1700.14px;font-size:12.75px;letter-spacing:-0.069px;color:#454540;">required to protect it in accordance with 32 CFR Part 2002 and GSA Order CIO 2103.2 CUI Policy.</div>
<div class="t" style="left:479.81px;top:1759.41px;font-size:22.25px;letter-spacing:-0.857px;color:#ffffff;-webkit-text-stroke:0.9px currentColor">SAM.gov</div>
<div class="t" style="left:480.70px;top:1790.24px;font-size:22.75px;letter-spacing:-0.177px;color:#ffffff;-webkit-text-stroke:0.95px currentColor">An official website of the U.S. General Services Administration</div>
</body></html>
